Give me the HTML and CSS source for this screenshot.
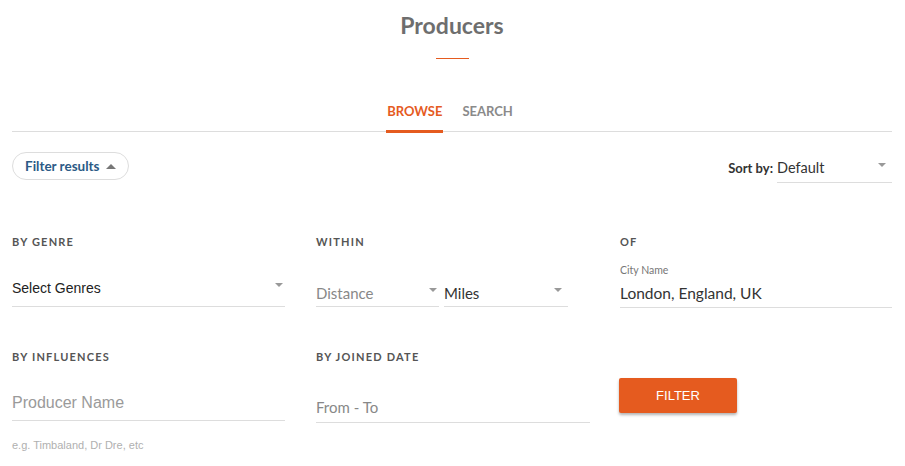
FILE: index.html
```html
<!DOCTYPE html>
<html>
<head>
<meta charset="utf-8">
<link rel="stylesheet" href="styles.css">
</head>
<body>
<div class="page">
  <header class="head">
    <h1 class="title">Producers</h1>
    <div class="title-rule"></div>
  </header>
  <nav class="tabs">
    <span class="tab active">BROWSE</span>
    <span class="tab">SEARCH</span>
  </nav>
  <div class="toolbar">
    <button class="pill">Filter results <span class="tri-up"></span></button>
    <div class="sort">
      <span class="sort-label">Sort by:</span>
      <div class="sort-select">Default<span class="caret"></span></div>
    </div>
  </div>
  <div class="grid">
    <div class="col">
      <div class="label">BY GENRE</div>
      <div class="field sel arial genre">Select Genres<span class="caret"></span></div>
    </div>
    <div class="col">
      <div class="label">WITHIN</div>
      <div class="pair">
        <div class="field sel muted dist">Distance<span class="caret"></span></div>
        <div class="field sel dark miles">Miles<span class="caret"></span></div>
      </div>
    </div>
    <div class="col">
      <div class="label">OF</div>
      <div class="city">
        <div class="small-label">City Name</div>
        <div class="field dark cityval">London, England, UK</div>
      </div>
    </div>
    <div class="col row2">
      <div class="label">BY INFLUENCES</div>
      <div class="field arial placeholder prod">Producer Name</div>
      <div class="hint">e.g. Timbaland, Dr Dre, etc</div>
    </div>
    <div class="col row2">
      <div class="label">BY JOINED DATE</div>
      <div class="field muted date">From - To</div>
    </div>
    <div class="col row2 btncol">
      <button class="filter-btn">FILTER</button>
    </div>
  </div>
</div>
</body>
</html>
```
FILE: styles.css
```css
* { box-sizing: border-box; }
body {
  margin: 0;
  background: #fff;
  font-family: Lato, "Noto Sans", sans-serif;
  color: #333;
}
.page {
  width: 880px;
  margin: 0 12px;
}
.head {
  display: flex;
  flex-direction: column;
  align-items: center;
  padding-top: 10px;
}
.title {
  margin: 0;
  font-size: 23px;
  font-weight: 700;
  color: #6e6e6e;
  line-height: 30px;
}
.title-rule {
  width: 33px;
  height: 1px;
  background: #e55b1f;
  margin-top: 18px;
}
.tabs {
  display: flex;
  justify-content: center;
  gap: 18px;
  margin-top: 42px;
  border-bottom: 1px solid #ddd;
  padding-right: 4px;
}
.tab {
  font-size: 13px;
  font-weight: 700;
  color: #8a8a8a;
  padding: 0 1px 9px;
  line-height: 20px;
  border-bottom: 3px solid transparent;
  margin-bottom: -2px;
}
.tab.active {
  color: #e55b1f;
  border-bottom-color: #e55b1f;
}
.toolbar {
  display: flex;
  justify-content: space-between;
  align-items: flex-start;
  margin-top: 20px;
}
.pill {
  height: 28px;
  padding: 0 12px 0 12px;
  border: 1px solid #ddd;
  border-radius: 14px;
  background: #fff;
  font-family: inherit;
  font-size: 13.5px;
  font-weight: 700;
  color: #2b5a85;
  display: flex;
  align-items: center;
  gap: 6px;
}
.tri-up {
  width: 0; height: 0;
  border-left: 5px solid transparent;
  border-right: 5px solid transparent;
  border-bottom: 5px solid #777;
}
.sort {
  display: flex;
  align-items: baseline;
  margin-top: 7px;
}
.sort-label {
  font-size: 13px;
  font-weight: 700;
  color: #333;
  margin-right: 4px;
}
.sort-select {
  position: relative;
  width: 115px;
  font-size: 14.5px;
  color: #333;
  padding-bottom: 6px;
  border-bottom: 1px solid #ddd;
}
.caret {
  position: absolute;
  right: 6px;
  top: 4px;
  width: 0; height: 0;
  border-left: 4px solid transparent;
  border-right: 4px solid transparent;
  border-top: 4px solid #999;
}
.grid {
  display: grid;
  grid-template-columns: 274px 274px 272px;
  column-gap: 30px;
  margin-top: 51px;
}
.label {
  font-size: 11px;
  font-weight: 700;
  letter-spacing: 1.2px;
  color: #555;
  line-height: 16px;
}
.field {
  position: relative;
  border-bottom: 1px solid #ddd;
  padding-bottom: 5px;
}
.arial { font-family: "Liberation Sans", Arial, sans-serif; }
.genre {
  margin-top: 28px;
  font-size: 14px;
  color: #222;
  line-height: 20px;
  padding-bottom: 8px;
  width: 273px;
}
.sel .caret { right: 2px; top: 5px; }
.pair {
  display: flex;
  gap: 5px;
  margin-top: 33px;
}
.dist { width: 123px; font-size: 15px; line-height: 20px; padding-bottom: 3px; }
.miles { width: 124px; font-size: 15px; line-height: 20px; padding-bottom: 3px; }
.miles .caret { right: 6px; }
.muted { color: #888; }
.dark { color: #333; }
.city { margin-top: 13px; }
.small-label {
  font-size: 10.5px;
  color: #777;
  line-height: 14px;
}
.cityval {
  margin-top: 6px;
  font-size: 15.5px;
  line-height: 20px;
  padding-bottom: 4px;
}
.row2 { margin-top: 41px; }
.prod {
  margin-top: 27px;
  font-size: 16px;
  color: #9a9a9a;
  line-height: 22px;
  padding-bottom: 6px;
  width: 273px;
}
.hint {
  font-family: "Liberation Sans", Arial, sans-serif;
  font-size: 11px;
  color: #b0b0b0;
  margin-top: 18px;
}
.date {
  margin-top: 32px;
  font-size: 15px;
  line-height: 20px;
  padding-bottom: 5px;
}
.btncol { display: flex; align-items: flex-start; }
.filter-btn {
  margin-top: 29px;
  width: 118px;
  height: 35px;
  border: none;
  border-radius: 2px;
  background: #e55b1f;
  color: #fff;
  font-family: "Liberation Sans", Arial, sans-serif;
  font-size: 13px;
  box-shadow: 0 2px 3px rgba(0,0,0,0.3);
  margin-left: -1px;
}
```
